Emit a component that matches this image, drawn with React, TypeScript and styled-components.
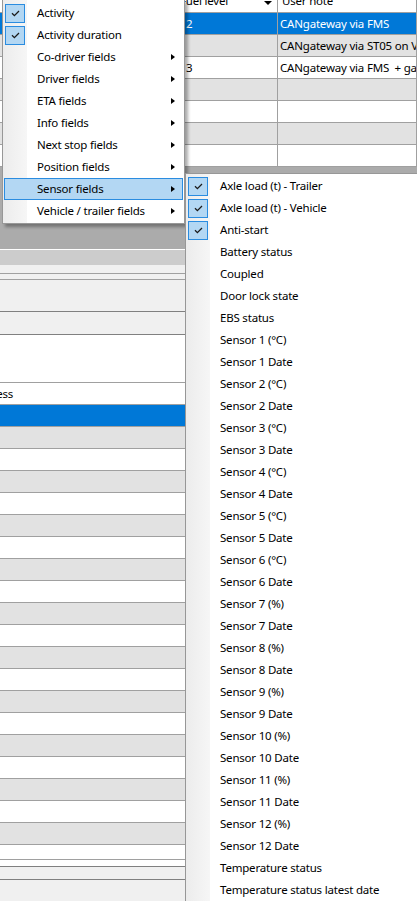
import React from 'react'
import styled, { createGlobalStyle } from 'styled-components'

const GlobalStyle = createGlobalStyle`
  *, *::before, *::after { box-sizing: border-box; }
  html, body { margin: 0; padding: 0; background: #f0f0f0; }
  body {
    font-family: 'Noto Sans', 'Liberation Sans', sans-serif;
    font-size: 11.5px;
    letter-spacing: -0.2px;
    color: #000;
  }
`

const Screen = styled.div`
  position: relative;
  width: 417px;
  height: 901px;
  overflow: hidden;
  display: flex;
  flex-direction: column;
  background: #f0f0f0;
`

/* ---------- top grid (vehicles) ---------- */

const TopGrid = styled.div`
  flex: none;
  height: 250px;
  display: flex;
  flex-direction: column;
  background: #ababab;
  border-bottom: 1px solid #ffffff;
`

const HeaderRow = styled.div`
  flex: none;
  height: 13px;
  display: grid;
  grid-template-columns: 170px 108px 1fr;
  grid-template-rows: 12px;
  background: #fff;
  border-bottom: 1px solid #a0a0a0;
  overflow: hidden;
`

const HeaderCell = styled.div<{ $indent?: number }>`
  height: 12px;
  display: flex;
  align-items: flex-end;
  justify-content: space-between;
  padding: 0 5px 0 ${p => p.$indent ?? 4}px;
  border-right: 1px solid #a0a0a0;
  line-height: 16px;
  white-space: nowrap;
`

const HeaderText = styled.span`
  flex: none;
  margin-bottom: 3px;
`

const SortArrow = styled.span`
  flex: none;
  width: 0;
  height: 0;
  margin-bottom: 7px;
  border-left: 4.5px solid transparent;
  border-right: 4.5px solid transparent;
  border-top: 4px solid #000;
`

type RowKind = 'selected' | 'alt' | 'plain'

const rowFill = (k: RowKind) => (k === 'selected' ? '#0078d7' : k === 'alt' ? '#e2e2e2' : '#ffffff')

const DataRow = styled.div<{ $kind: RowKind }>`
  flex: none;
  height: 22px;
  display: grid;
  grid-template-columns: 170px 108px 1fr;
  background: ${p => rowFill(p.$kind)};
  color: ${p => (p.$kind === 'selected' ? '#fff' : '#000')};
  border-bottom: 1px solid #a0a0a0;
`

const DataCell = styled.div<{ $indent?: number }>`
  display: flex;
  align-items: center;
  padding-left: ${p => p.$indent ?? 2}px;
  border-right: 1px solid #a0a0a0;
  white-space: pre;
  overflow: hidden;
`

/* ---------- lower panel (stops) ---------- */

const LowerPanel = styled.div`
  flex: 1;
  width: 186px;
  display: flex;
  flex-direction: column;
  border-right: 1px solid #808080;
  overflow: hidden;
`

const Band = styled.div<{ $h: number; $fill?: string; $line?: string }>`
  flex: none;
  height: ${p => p.$h}px;
  background: ${p => p.$fill ?? '#f0f0f0'};
  border-bottom: ${p => (p.$line ? `1px solid ${p.$line}` : 'none')};
`

const Viewport = styled.div`
  flex: none;
  margin-left: -30px;
  display: flex;
  flex-direction: column;
`

const ColumnHeader = styled.div`
  height: 22px;
  display: flex;
  align-items: center;
  background: #fff;
  border-bottom: 1px solid #a0a0a0;
  padding-left: 1px;
`

const StopRow = styled.div<{ $kind: RowKind; $h?: number }>`
  flex: none;
  height: ${p => p.$h ?? 22}px;
  background: ${p => rowFill(p.$kind)};
  border-bottom: 1px solid #a0a0a0;
`

/* ---------- context menus ---------- */

const MenuPanel = styled.ul`
  position: absolute;
  margin: 0;
  padding: 2px 0;
  list-style: none;
  border: 1px solid #979797;
  background: linear-gradient(to right, #ececec 0, #f6f6f6 24px, #ffffff 24px);
  box-shadow: 3px 3px 3px rgba(0, 0, 0, 0.32);
`

const MainMenu = styled(MenuPanel)`
  left: 2px;
  top: -1px;
  width: 183px;
  padding-bottom: 1px;
`

const SubMenu = styled(MenuPanel)`
  left: 185px;
  top: 173px;
  width: 250px;
  padding-top: 1px;
`

const MenuItem = styled.li<{ $active?: boolean }>`
  height: 22px;
  margin: 0 1px;
  display: flex;
  align-items: center;
  border: 1px solid ${p => (p.$active ? '#2a8ce0' : 'transparent')};
  background: ${p => (p.$active ? '#b3d7f3' : 'transparent')};
  white-space: nowrap;
`

const CheckSlot = styled.span<{ $on?: boolean }>`
  flex: none;
  width: 20px;
  height: 19px;
  display: flex;
  align-items: center;
  justify-content: center;
  border: 1px solid ${p => (p.$on ? '#2a8ce0' : 'transparent')};
  background: ${p => (p.$on ? '#b3d7f3' : 'transparent')};
`

const Label = styled.span`
  margin-left: 12px;
  line-height: 20px;
`

const SubArrow = styled.span`
  margin-left: auto;
  margin-right: 7px;
  width: 0;
  height: 0;
  border-top: 3.5px solid transparent;
  border-bottom: 3.5px solid transparent;
  border-left: 4px solid #000;
`

const Tick = () => (
  <svg width="9" height="7" viewBox="0 0 9 7">
    <path d="M1 3.2 L3.4 5.6 L8 1" fill="none" stroke="#1b1b1b" strokeWidth="1.3" />
  </svg>
)

type Entry = { label: string; checked?: boolean; sub?: boolean; active?: boolean }

const mainEntries: Entry[] = [
  { label: 'Activity', checked: true },
  { label: 'Activity duration', checked: true },
  { label: 'Co-driver fields', sub: true },
  { label: 'Driver fields', sub: true },
  { label: 'ETA fields', sub: true },
  { label: 'Info fields', sub: true },
  { label: 'Next stop fields', sub: true },
  { label: 'Position fields', sub: true },
  { label: 'Sensor fields', sub: true, active: true },
  { label: 'Vehicle / trailer fields', sub: true },
]

const sensorEntries: Entry[] = [
  { label: 'Axle load (t) - Trailer', checked: true },
  { label: 'Axle load (t) - Vehicle', checked: true },
  { label: 'Anti-start', checked: true },
  { label: 'Battery status' },
  { label: 'Coupled' },
  { label: 'Door lock state' },
  { label: 'EBS status' },
  ...Array.from({ length: 12 }, (_, i) => [
    { label: `Sensor ${i + 1} (${i < 6 ? '°C' : '%'})` },
    { label: `Sensor ${i + 1} Date` },
  ]).flat(),
  { label: 'Temperature status' },
  { label: 'Temperature status latest date' },
]

const vehicleRows: { kind: RowKind; level: string; note: string }[] = [
  { kind: 'selected', level: '2', note: 'CANgateway via FMS' },
  { kind: 'alt', level: '', note: 'CANgateway via ST05 on VDO' },
  { kind: 'plain', level: '3', note: 'CANgateway via FMS  + gateway' },
  { kind: 'alt', level: '', note: '' },
  { kind: 'plain', level: '', note: '' },
  { kind: 'alt', level: '', note: '' },
  { kind: 'plain', level: '', note: '' },
]

function MenuList({ entries }: { entries: Entry[] }) {
  return (
    <>
      {entries.map(e => (
        <MenuItem key={e.label} $active={e.active}>
          <CheckSlot $on={e.checked}>{e.checked && <Tick />}</CheckSlot>
          <Label>{e.label}</Label>
          {e.sub && <SubArrow />}
        </MenuItem>
      ))}
    </>
  )
}

export default function App() {
  return (
    <Screen>
      <GlobalStyle />
      <TopGrid>
        <HeaderRow>
          <HeaderCell />
          <HeaderCell $indent={10}>
            <HeaderText>Fuel level</HeaderText>
            <SortArrow />
          </HeaderCell>
          <HeaderCell>
            <HeaderText>User note</HeaderText>
          </HeaderCell>
        </HeaderRow>
        {vehicleRows.map((r, i) => (
          <DataRow key={i} $kind={r.kind}>
            <DataCell />
            <DataCell $indent={16}>{r.level}</DataCell>
            <DataCell>{r.note}</DataCell>
          </DataRow>
        ))}
      </TopGrid>

      <LowerPanel>
        <Band $h={15} $fill="#cccccc" />
        <Band $h={9} $line="#a0a0a0" />
        <Band $h={6} $line="#a0a0a0" />
        <Band $h={32} $line="#808080" />
        <Band $h={23} $line="#808080" />
        <Band $h={48} $fill="#ffffff" $line="#a0a0a0" />
        <Viewport>
          <ColumnHeader>Address</ColumnHeader>
          {Array.from({ length: 20 }, (_, i) => (
            <StopRow key={i} $kind={i === 0 ? 'selected' : i % 2 ? 'alt' : 'plain'} />
          ))}
          <StopRow $kind="plain" $h={15} />
        </Viewport>
        <Band $h={7} $fill="#ffffff" $line="#808080" />
        <Band $h={13} $line="#808080" />
      </LowerPanel>

      <MainMenu>
        <MenuList entries={mainEntries} />
      </MainMenu>
      <SubMenu>
        <MenuList entries={sensorEntries} />
      </SubMenu>
    </Screen>
  )
}
